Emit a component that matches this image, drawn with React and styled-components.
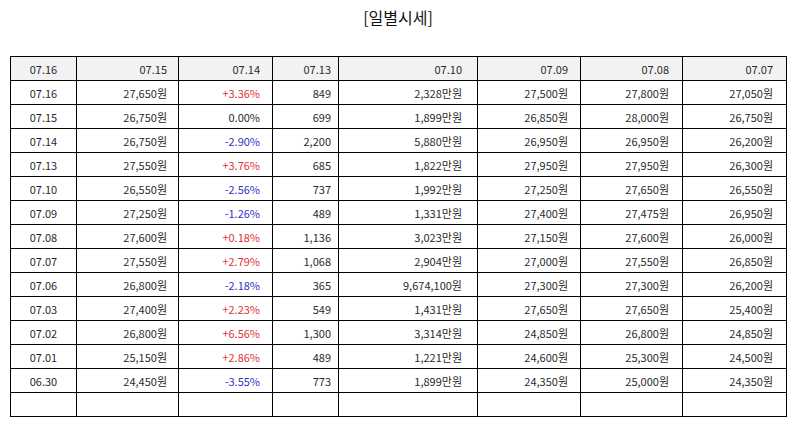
import React from 'react'
import styled, { createGlobalStyle } from 'styled-components'

const GlobalStyle = createGlobalStyle`
  html, body {
    margin: 0;
    padding: 0;
    background: #fff;
  }
  body {
    font-family: "Noto Sans CJK KR", "Noto Sans", sans-serif;
    color: #222;
  }
`

const Page = styled.div`
  width: 794px;
  padding: 0 8px 0 10px;
  box-sizing: border-box;
`

const Title = styled.h2`
  margin: 0;
  height: 56px;
  padding-top: 5px;
  box-sizing: border-box;
  text-align: center;
  font-size: 16px;
  font-weight: 400;
  line-height: 24px;
  color: #111;
`

const Table = styled.table`
  border-collapse: collapse;
  table-layout: fixed;
  width: 776px;
  font-size: 11px;
  color: #2a2a2a;
`

const Cell = styled.td`
  border: 1px solid #000;
  height: 24px;
  padding: 0 ${p => p.$pr}px 0 0;
  box-sizing: border-box;
  line-height: 14px;
  white-space: nowrap;
  text-align: ${p => (p.$center ? 'center' : 'right')};
  color: ${p => (p.$tone === 'up' ? '#e0313a' : p.$tone === 'down' ? '#3434c8' : 'inherit')};
  ${p => p.$center && 'padding-right: 0;'}
`

const HeadRow = styled.tr`
  background: #f2f2f2;
`

const columns = [
  { width: 66, pr: 0, center: true },
  { width: 102, pr: 11 },
  { width: 94, pr: 12 },
  { width: 66, pr: 7 },
  { width: 139, pr: 15 },
  { width: 103, pr: 12 },
  { width: 102, pr: 13 },
  { width: 104, pr: 13 }
]

const header = ['07.16', '07.15', '07.14', '07.13', '07.10', '07.09', '07.08', '07.07']

const rows = [
  ['07.16', '27,650원', '+3.36%', '849', '2,328만원', '27,500원', '27,800원', '27,050원'],
  ['07.15', '26,750원', '0.00%', '699', '1,899만원', '26,850원', '28,000원', '26,750원'],
  ['07.14', '26,750원', '-2.90%', '2,200', '5,880만원', '26,950원', '26,950원', '26,200원'],
  ['07.13', '27,550원', '+3.76%', '685', '1,822만원', '27,950원', '27,950원', '26,300원'],
  ['07.10', '26,550원', '-2.56%', '737', '1,992만원', '27,250원', '27,650원', '26,550원'],
  ['07.09', '27,250원', '-1.26%', '489', '1,331만원', '27,400원', '27,475원', '26,950원'],
  ['07.08', '27,600원', '+0.18%', '1,136', '3,023만원', '27,150원', '27,600원', '26,000원'],
  ['07.07', '27,550원', '+2.79%', '1,068', '2,904만원', '27,000원', '27,550원', '26,850원'],
  ['07.06', '26,800원', '-2.18%', '365', '9,674,100원', '27,300원', '27,300원', '26,200원'],
  ['07.03', '27,400원', '+2.23%', '549', '1,431만원', '27,650원', '27,650원', '25,400원'],
  ['07.02', '26,800원', '+6.56%', '1,300', '3,314만원', '24,850원', '26,800원', '24,850원'],
  ['07.01', '25,150원', '+2.86%', '489', '1,221만원', '24,600원', '25,300원', '24,500원'],
  ['06.30', '24,450원', '-3.55%', '773', '1,899만원', '24,350원', '25,000원', '24,350원'],
  ['', '', '', '', '', '', '', '']
]

const toneOf = (v, i) => {
  if (i !== 2) return null
  if (v.startsWith('+')) return 'up'
  if (v.startsWith('-')) return 'down'
  return null
}

export default function App() {
  return (
    <Page>
      <GlobalStyle />
      <Title>[일별시세]</Title>
      <Table>
        <colgroup>
          {columns.map((c, i) => (
            <col key={i} style={{ width: c.width }} />
          ))}
        </colgroup>
        <tbody>
          <HeadRow>
            {header.map((h, i) => (
              <Cell key={i} $pr={columns[i].pr} $center={columns[i].center}>
                {h}
              </Cell>
            ))}
          </HeadRow>
          {rows.map((r, ri) => (
            <tr key={ri}>
              {r.map((v, i) => (
                <Cell key={i} $pr={columns[i].pr} $center={columns[i].center} $tone={toneOf(v, i)}>
                  {v}
                </Cell>
              ))}
            </tr>
          ))}
        </tbody>
      </Table>
    </Page>
  )
}
